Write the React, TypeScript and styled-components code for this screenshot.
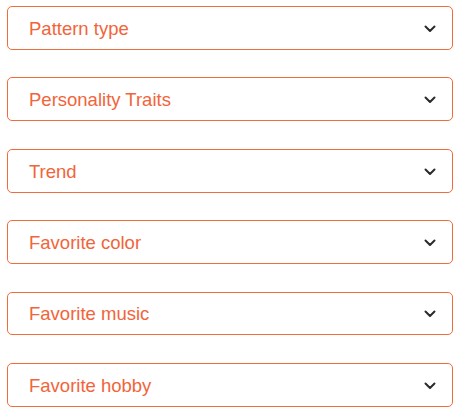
import React from 'react';
import styled, { createGlobalStyle } from 'styled-components';

const GlobalStyle = createGlobalStyle`
  body {
    margin: 0;
    background: #ffffff;
    font-family: 'Liberation Sans', Arial, sans-serif;
  }
`;

const List = styled.div`
  display: flex;
  flex-direction: column;
  gap: 27.6px;
  padding: 6px 5px 0 7px;
  width: 446px;
`;

const Select = styled.div`
  display: flex;
  align-items: center;
  justify-content: space-between;
  height: 43.8px;
  box-sizing: border-box;
  padding: 2px 16px 0 21px;
  border: 1px solid #f26b3a;
  border-radius: 5px;
  background: #fff;
  cursor: pointer;
`;

const Label = styled.span`
  font-size: 18.5px;
  color: #f2643a;
`;

const Chevron = () => (
  <svg width="12" height="8" viewBox="0 0 12 8">
    <path d="M1.5 1.5 L6 6 L10.5 1.5" fill="none" stroke="#2b2b2b" strokeWidth="2" strokeLinecap="round" strokeLinejoin="round" />
  </svg>
);

const fields = [
  'Pattern type',
  'Personality Traits',
  'Trend',
  'Favorite color',
  'Favorite music',
  'Favorite hobby',
];

const App: React.FC = () => {
  return (
    <>
      <GlobalStyle />
      <List>
        {fields.map((f) => (
          <Select key={f}>
            <Label>{f}</Label>
            <Chevron />
          </Select>
        ))}
      </List>
    </>
  );
};

export default App;
